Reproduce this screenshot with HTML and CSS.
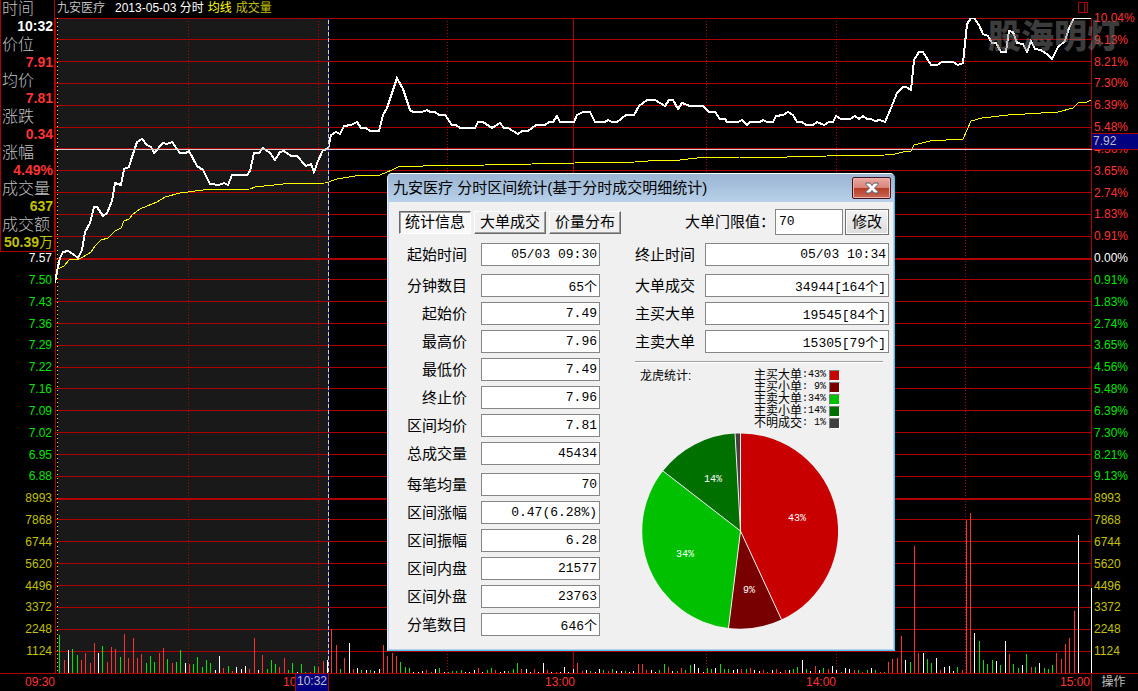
FILE: index.html
```html
<!DOCTYPE html>
<html lang="zh-CN">
<head>
<meta charset="utf-8">
<meta name="viewport" content="width=device-width, initial-scale=1">
<title>九安医疗 分时</title>
<link rel="stylesheet" href="styles.css">
</head>
<body>
<main class="terminal">
  <header class="chart-head">
    <h1 class="stock-name">九安医疗</h1>
    <span class="date">2013-05-03 分时</span>
    <span class="avg">均线</span>
    <span class="vol">成交量</span>
    <svg class="pane-icon" width="11" height="12" viewBox="0 0 11 12" aria-hidden="true"><path d="M0.5 0.5h9v10h-9zM6.5 0.5v10"/></svg>
  </header>

  <ol class="scale scale-left">
    <li class="flat">7.57</li>
    <li class="down">7.50</li>
    <li class="down">7.43</li>
    <li class="down">7.36</li>
    <li class="down">7.29</li>
    <li class="down">7.22</li>
    <li class="down">7.16</li>
    <li class="down">7.09</li>
    <li class="down">7.02</li>
    <li class="down">6.95</li>
    <li class="down">6.88</li>
    <li class="volume">8993</li>
    <li class="volume">7868</li>
    <li class="volume">6744</li>
    <li class="volume">5620</li>
    <li class="volume">4496</li>
    <li class="volume">3372</li>
    <li class="volume">2248</li>
    <li class="volume">1124</li>
  </ol>

  <svg class="plot" viewBox="55 18 1037 656" preserveAspectRatio="none" role="img" aria-label="分时走势图">
    <rect class="range" x="58" y="19" width="270" height="654"/>
    <path class="grid" d="M55 18.5H1092M55 39.5H1092M55 61.5H1092M55 83.5H1092M55 105.5H1092M55 127.5H1092M55 148.5H1092M55 170.5H1092M55 192.5H1092M55 214.5H1092M55 236.5H1092M55 279.5H1092M55 301.5H1092M55 323.5H1092M55 345.5H1092M55 367.5H1092M55 388.5H1092M55 410.5H1092M55 432.5H1092M55 454.5H1092M55 476.5H1092M55 519.5H1092M55 541.5H1092M55 563.5H1092M55 585.5H1092M55 607.5H1092M55 629.5H1092M55 651.5H1092M55 673.5H1092M55.5 18V674M573.5 18V674M1091.5 18V674"/>
    <path class="grid heavy" d="M55 259H1092M55 499H1092"/>
    <path class="grid dotted" d="M188.5 21V673M318.5 21V673M447.5 21V673M706.5 21V673M836.5 21V673M965.5 21V673"/>
    <path class="range-start" d="M57.5 18V673"/>
    <path class="bar up" d="M64.5 673V660M81.5 673V660M85.5 673V653M90.5 673V663M94.5 673V643M107.5 673V662M111.5 673V647M115.5 673V649M124.5 673V634M128.5 673V658M133.5 673V638M137.5 673V658M141.5 673V654M159.5 673V653M163.5 673V648M172.5 673V663M189.5 673V664M223.5 673V668M232.5 673V671M249.5 673V669M254.5 673V638M262.5 673V655M279.5 673V667M284.5 673V658M310.5 673V672M318.5 673V667M323.5 673V661M331.5 673V629M336.5 673V645M344.5 673V658M353.5 673V669M383.5 673V645M387.5 673V656M392.5 673V653M396.5 673V656M426.5 673V670M478.5 673V668M495.5 673V670M521.5 673V669M534.5 673V669M547.5 673V670M556.5 673V672M577.5 673V663M582.5 673V671M608.5 673V671M638.5 673V664M642.5 673V664M646.5 673V670M668.5 673V667M681.5 673V668M741.5 673V669M750.5 673V668M763.5 673V670M776.5 673V669M785.5 673V670M815.5 673V666M828.5 673V669M854.5 673V670M862.5 673V672M880.5 673V672M888.5 673V662M892.5 673V659M897.5 673V658M901.5 673V636M914.5 673V546M918.5 673V653M940.5 673V670M962.5 673V670M966.5 673V520M970.5 673V513M1009.5 673V654M1031.5 673V667M1056.5 673V653M1061.5 673V659M1065.5 673V644M1069.5 673V638M1074.5 673V611"/>
    <path class="bar down" d="M59.5 673V635M72.5 673V649M77.5 673V655M102.5 673V646M120.5 673V657M146.5 673V663M150.5 673V656M154.5 673V662M167.5 673V659M176.5 673V662M180.5 673V650M193.5 673V664M197.5 673V657M202.5 673V667M206.5 673V660M210.5 673V663M228.5 673V666M267.5 673V669M271.5 673V660M275.5 673V664M288.5 673V670M292.5 673V663M301.5 673V664M305.5 673V672M314.5 673V666M340.5 673V669M361.5 673V670M370.5 673V670M400.5 673V662M405.5 673V667M409.5 673V668M431.5 673V672M439.5 673V668M448.5 673V672M452.5 673V671M456.5 673V671M461.5 673V670M487.5 673V670M491.5 673V668M508.5 673V671M513.5 673V669M517.5 673V663M590.5 673V671M603.5 673V670M612.5 673V669M625.5 673V671M659.5 673V670M664.5 673V664M677.5 673V671M685.5 673V670M690.5 673V665M707.5 673V668M711.5 673V669M720.5 673V664M724.5 673V669M728.5 673V669M746.5 673V669M767.5 673V672M793.5 673V669M797.5 673V667M806.5 673V669M823.5 673V668M841.5 673V672M858.5 673V670M867.5 673V670M875.5 673V670M884.5 673V672M910.5 673V662M927.5 673V659M931.5 673V663M957.5 673V667M979.5 673V641M983.5 673V660M987.5 673V664M992.5 673V660M1000.5 673V665M1013.5 673V664M1018.5 673V668M1026.5 673V654M1035.5 673V667M1044.5 673V668M1048.5 673V669M1052.5 673V665"/>
    <path class="bar even" d="M68.5 673V650M98.5 673V653M185.5 673V663M215.5 673V670M219.5 673V656M236.5 673V667M241.5 673V669M245.5 673V666M258.5 673V670M297.5 673V672M327.5 673V660M349.5 673V643M357.5 673V668M366.5 673V670M374.5 673V671M379.5 673V669M413.5 673V672M418.5 673V672M422.5 673V671M435.5 673V669M444.5 673V672M465.5 673V672M469.5 673V672M474.5 673V670M482.5 673V672M500.5 673V672M504.5 673V671M526.5 673V669M530.5 673V672M538.5 673V672M543.5 673V663M551.5 673V672M560.5 673V672M564.5 673V667M568.5 673V672M573.5 673V669M586.5 673V670M595.5 673V672M599.5 673V669M616.5 673V671M621.5 673V671M629.5 673V672M633.5 673V671M651.5 673V670M655.5 673V672M672.5 673V671M694.5 673V664M698.5 673V668M703.5 673V672M715.5 673V668M733.5 673V670M737.5 673V669M754.5 673V670M759.5 673V671M772.5 673V670M780.5 673V672M789.5 673V670M802.5 673V660M810.5 673V671M819.5 673V670M832.5 673V666M836.5 673V670M845.5 673V668M849.5 673V669M871.5 673V668M905.5 673V660M923.5 673V653M936.5 673V658M944.5 673V667M949.5 673V666M953.5 673V671M974.5 673V633M996.5 673V661M1005.5 673V641M1022.5 673V665M1039.5 673V663M1078.5 673V535M1091.5 673V588"/>
    <polyline class="average" points="57,269 60,268 64,266 69,260 79,259 83,257 91,252 95,246 101,240 108,238 115,231 121,228 124,221 129,219 133,214 140,209 147,206 157,202 165,197 180,193 203,190 250,189 255,187 283,184 325,183 337,179 355,176 380,175 392,170 398,167 423,166 485,165 532,164 575,163 635,162 648,161 680,160 697,158 740,157 787,157 827,156 885,155 895,154 903,152 911,151 914,145 930,141 963,139 971,121 982,118 1008,115 1058,112 1073,108 1078,103 1087,102 1091,100"/>
    <polyline class="price" points="55,283 57,271 60,258 63,252 68,251 73,254 78,258 82,250 85,232 90,223 94,207 97,207 103,216 107,213 112,201 115,183 121,185 124,169 129,167 132,157 137,142 142,139 147,145 151,147 154,153 163,143 167,144 172,142 180,153 186,153 189,151 197,166 203,170 210,184 219,185 224,183 228,185 232,175 247,175 250,171 254,153 259,153 263,148 270,153 275,160 280,152 284,151 291,156 297,156 306,166 311,164 314,172 318,161 323,150 328,149 331,135 336,132 340,134 344,126 351,125 357,122 361,128 366,128 370,131 379,131 383,115 387,108 397,78 403,89 410,110 413,112 422,112 427,110 430,112 435,112 439,115 445,115 452,125 456,125 460,128 475,128 478,122 483,122 492,128 500,123 504,128 508,128 518,134 522,131 528,131 536,125 545,125 549,122 553,122 557,116 560,122 574,122 577,115 583,112 590,112 595,122 605,122 608,120 612,122 617,122 626,115 634,115 639,106 647,100 655,100 665,106 669,100 673,100 678,109 682,103 690,106 703,106 709,112 715,112 720,119 725,119 727,122 738,122 742,120 747,125 750,122 760,122 763,120 767,122 773,122 776,116 783,115 788,112 793,115 797,122 802,122 806,125 813,125 817,122 824,125 829,122 833,122 836,116 841,119 850,119 855,116 859,119 863,116 867,119 871,119 875,121 880,120 885,122 891,108 897,93 903,87 906,87 911,90 914,60 919,52 923,52 931,65 937,65 942,62 953,62 958,65 963,63 967,24 971,18 974,18 979,25 983,34 988,36 992,43 996,43 1001,52 1006,52 1009,31 1013,32 1017,43 1023,44 1027,52 1031,41 1035,49 1041,50 1048,55 1052,59 1058,47 1065,41 1069,28 1074,18 1091,18"/>
    <path class="cross" d="M55 149.5H1092M328.5 18V673"/>
    <path class="cross-dash" d="M328.5 18V673"/>
  </svg>

  <ol class="scale scale-right">
    <li class="up">10.04%</li>
    <li class="up">9.13%</li>
    <li class="up">8.21%</li>
    <li class="up">7.30%</li>
    <li class="up">6.39%</li>
    <li class="up">5.48%</li>
    <li class="up">4.56%</li>
    <li class="up">3.65%</li>
    <li class="up">2.74%</li>
    <li class="up">1.83%</li>
    <li class="up">0.91%</li>
    <li class="flat">0.00%</li>
    <li class="down">0.91%</li>
    <li class="down">1.83%</li>
    <li class="down">2.74%</li>
    <li class="down">3.65%</li>
    <li class="down">4.56%</li>
    <li class="down">5.48%</li>
    <li class="down">6.39%</li>
    <li class="down">7.30%</li>
    <li class="down">8.21%</li>
    <li class="down">9.13%</li>
    <li class="volume">8993</li>
    <li class="volume">7868</li>
    <li class="volume">6744</li>
    <li class="volume">5620</li>
    <li class="volume">4496</li>
    <li class="volume">3372</li>
    <li class="volume">2248</li>
    <li class="volume">1124</li>
  </ol>
  <span class="price-tag">7.92</span>
  <span class="watermark">股海明灯</span>

  <footer class="times">
    <span>09:30</span>
    <span class="covered">10:30</span>
    <span>13:00</span>
    <span>14:00</span>
    <span class="last">15:00</span>
    <button class="operate" type="button">操作</button>
    <span class="time-tag">10:32</span>
  </footer>

  <dl class="quote">
    <dt>时间</dt><dd class="flat">10:32</dd>
    <dt>价位</dt><dd class="up">7.91</dd>
    <dt>均价</dt><dd class="up">7.81</dd>
    <dt>涨跌</dt><dd class="up">0.34</dd>
    <dt>涨幅</dt><dd class="up">4.49%</dd>
    <dt>成交量</dt><dd class="volume">637</dd>
    <dt>成交额</dt><dd class="volume">50.39<span class="unit">万</span></dd>
  </dl>

  <section class="dialog" role="dialog" aria-labelledby="dialog-title">
    <div class="title-bar">
      <h2 id="dialog-title">九安医疗 分时区间统计(基于分时成交明细统计)</h2>
      <button class="close" type="button" aria-label="关闭">
        <svg width="14" height="12" viewBox="0 0 14 12" aria-hidden="true"><path d="M1 1h4l2 2.500l2-2.500h4v1.500l-3.500 3.500l3.500 3.500v1.500h-4l-2-2.500l-2 2.500h-4v-1.500l3.500-3.500l-3.500-3.500z"/></svg>
      </button>
    </div>
    <div class="dialog-body">
      <div class="toolbar">
        <div class="tabs">
          <button class="tab active" type="button">统计信息</button>
          <button class="tab" type="button">大单成交</button>
          <button class="tab" type="button">价量分布</button>
        </div>
        <div class="limit">
          <label for="limit">大单门限值：</label>
          <input id="limit" type="text" value="70">
          <button class="modify" type="button">修改</button>
        </div>
      </div>
      <div class="columns">
        <div class="fields fields-left">
          <div class="group">
            <div class="field"><label for="a1">起始时间</label><input id="a1" readonly value="05/03 09:30"></div>
          </div>
          <div class="group">
            <div class="field"><label for="a2">分钟数目</label><input id="a2" readonly value="65个"></div>
            <div class="field"><label for="a3">起始价</label><input id="a3" readonly value="7.49"></div>
            <div class="field"><label for="a4">最高价</label><input id="a4" readonly value="7.96"></div>
            <div class="field"><label for="a5">最低价</label><input id="a5" readonly value="7.49"></div>
            <div class="field"><label for="a6">终止价</label><input id="a6" readonly value="7.96"></div>
            <div class="field"><label for="a7">区间均价</label><input id="a7" readonly value="7.81"></div>
            <div class="field"><label for="a8">总成交量</label><input id="a8" readonly value="45434"></div>
          </div>
          <div class="group">
            <div class="field"><label for="a9">每笔均量</label><input id="a9" readonly value="70"></div>
            <div class="field"><label for="a10">区间涨幅</label><input id="a10" readonly value="0.47(6.28%)"></div>
            <div class="field"><label for="a11">区间振幅</label><input id="a11" readonly value="6.28"></div>
            <div class="field"><label for="a12">区间内盘</label><input id="a12" readonly value="21577"></div>
            <div class="field"><label for="a13">区间外盘</label><input id="a13" readonly value="23763"></div>
            <div class="field"><label for="a14">分笔数目</label><input id="a14" readonly value="646个"></div>
          </div>
        </div>
        <div class="side">
          <div class="fields fields-right">
            <div class="group">
              <div class="field"><label for="b1">终止时间</label><input id="b1" readonly value="05/03 10:34"></div>
            </div>
            <div class="group">
              <div class="field"><label for="b2">大单成交</label><input id="b2" readonly value="34944[164个]"></div>
              <div class="field"><label for="b3">主买大单</label><input id="b3" readonly value="19545[84个]"></div>
              <div class="field"><label for="b4">主卖大单</label><input id="b4" readonly value="15305[79个]"></div>
            </div>
          </div>
          <hr class="rule">
          <div class="share">
            <h3>龙虎统计:</h3>
            <ul class="legend">
              <li>主买大单<span class="num">:43%</span><i class="swatch big-buy"></i></li>
              <li>主买小单<span class="num">: 9%</span><i class="swatch small-buy"></i></li>
              <li>主卖大单<span class="num">:34%</span><i class="swatch big-sell"></i></li>
              <li>主卖小单<span class="num">:14%</span><i class="swatch small-sell"></i></li>
              <li>不明成交<span class="num">: 1%</span><i class="swatch unknown"></i></li>
            </ul>
          </div>
          <svg class="pie" width="196" height="196" viewBox="0 0 196 196" role="img" aria-label="龙虎统计饼图">
            <path class="big-buy" d="M98.500 98V0.500A97.500 97.500 0 0 1 139.500 186.500Z"/>
            <path class="small-buy" d="M98.500 98L139.500 186.500A97.500 97.500 0 0 1 86.500 195Z"/>
            <path class="big-sell" d="M98.500 98L86.500 195A97.500 97.500 0 0 1 21 38Z"/>
            <path class="small-sell" d="M98.500 98L21 38A97.500 97.500 0 0 1 93 0.500Z"/>
            <path class="unknown" d="M98.500 98L93 0.500H98.500Z"/>
            <path class="cuts" d="M98.500 0V98L139.500 186.500M98.500 98L86.500 195M98.500 98L21 38M98.500 98L93 0"/>
            <text x="155" y="88">43%</text>
            <text x="107" y="160">9%</text>
            <text x="43" y="124">34%</text>
            <text x="71" y="49">14%</text>
          </svg>
        </div>
      </div>
    </div>
  </section>
</main>
</body>
</html>
```

FILE: styles.css
```css
* {
  box-sizing: border-box;
}

body {
  margin: 0;
  background: #000;
  color: #c0c0c0;
  font: 12px/18px "Liberation Sans", "Noto Sans CJK SC", sans-serif;
}

h1, h2, h3, ol, ul, dl, dd {
  margin: 0;
  padding: 0;
  font-size: inherit;
  font-weight: normal;
  list-style: none;
}

button, input {
  margin: 0;
  padding: 0;
  font: inherit;
  color: inherit;
}

.up { color: #ff3232; }
.down { color: #00e600; }
.flat { color: #fff; }
.volume { color: #c0c000; }

.terminal {
  position: relative;
  display: grid;
  grid-template-columns: 55px minmax(0, 1fr) 46px;
  grid-template-rows: 18px minmax(0, 1fr) 17px;
  height: 100vh;
  min-height: 680px;
  overflow: hidden;
}

/* Header */
.chart-head {
  grid-column: 2;
  display: flex;
  gap: 4px;
  padding: 0 3px 0 2px;
  line-height: 17px;
  white-space: nowrap;
}
.stock-name { margin-right: 6px; }
.date { color: #fff; }
.avg { color: #ff0; }
.chart-head .vol { color: #c0c000; }
.pane-icon {
  margin: 2px 0 0 auto;
  fill: none;
  stroke: #b00000;
}

/* Value scales */
.scale {
  grid-row: 2;
  display: grid;
  grid-template-rows: repeat(30, minmax(0, 1fr));
  align-items: center;
  margin: -11px 0 12px;
}
.scale-left {
  grid-column: 1;
  grid-template-rows: 11fr repeat(19, minmax(0, 1fr));
  padding-right: 3px;
  text-align: right;
}
.scale-left::before { content: ""; }
.scale-right {
  grid-column: 3;
  padding-left: 2px;
}

/* Plot */
.plot {
  grid-area: 2 / 2;
  display: block;
  width: 100%;
  height: 100%;
  fill: none;
  shape-rendering: crispEdges;
}
.plot path, .plot polyline { vector-effect: non-scaling-stroke; }
.range { fill: #191919; }
.grid { stroke: #b00000; }
.heavy { stroke-width: 2; }
.dotted { stroke-dasharray: 1 2; }
.range-start { stroke: #ff0; stroke-dasharray: 1 3; }
.bar.up { stroke: #ff3232; }
.bar.down { stroke: #00e600; }
.bar.even { stroke: #fff; }
.average { stroke: #ff0; }
.price { stroke: #fff; stroke-width: 2; }
.cross { stroke: #d0d0d0; }
.cross-dash { stroke: #2020c0; stroke-dasharray: 2 4; }

.price-tag {
  position: absolute;
  top: 133px;
  right: 0;
  width: 46px;
  height: 17px;
  padding-left: 1px;
  border-top: 1px solid #b00000;
  border-bottom: 1px solid #b00000;
  background: #000080;
  line-height: 15px;
}
.watermark {
  position: absolute;
  top: 11px;
  right: 18px;
  color: rgba(120, 120, 120, 0.5);
  font: 900 33px/46px "Noto Sans CJK SC", sans-serif;
}

/* Time axis */
.times {
  position: relative;
  grid-column: 1 / -1;
  display: grid;
  grid-template-columns: 55px 263fr 257fr 261fr 256fr 46px;
  color: #ff3232;
  line-height: 17px;
  text-align: right;
  box-shadow: 0 -1px #b00000;
}
.covered { padding-right: 5px; }
.last {
  padding-right: 1px;
  border-right: 1px solid #b00000;
}
.operate {
  border: 0;
  padding-right: 3px;
  background: none;
  color: #c0c0c0;
}
.time-tag {
  position: absolute;
  top: 0;
  left: 295px;
  width: 34px;
  height: 17px;
  border: solid #b00000;
  border-width: 0 1px;
  background: #000080;
  color: #c0c0c0;
  line-height: 14px;
  text-align: center;
}

/* Quote panel */
.quote {
  position: absolute;
  top: 0;
  left: 0;
  width: 55px;
  height: 252px;
  padding: 0 1px;
  border: solid #b00000;
  border-width: 0 1px 1px;
  background: #000;
  font-size: 14px;
  line-height: 17px;
}
.quote dt { height: 18px; font-size: 16px; font-weight: 300; line-height: 17px; }
.quote dd { height: 18px; font-weight: bold; text-align: right; white-space: nowrap; }
.quote .unit { font-weight: normal; }

/* Statistics window */
.dialog {
  position: absolute;
  top: 173px;
  left: 387px;
  width: 508px;
  border: 1px solid;
  border-color: #fff #40c8f0 #40c8f0 #e8f0f8;
  border-radius: 5px 5px 0 0;
  background: #b9d1ea;
  color: #000;
  font: 15px/20px "Liberation Sans", "Noto Sans CJK SC", sans-serif;
}
.title-bar {
  display: flex;
  align-items: center;
  justify-content: space-between;
  height: 28px;
  padding: 0 3px 0 5px;
  border-radius: 4px 4px 0 0;
  background: linear-gradient(#99b4d1, #b9d1ea);
}
.close {
  display: grid;
  place-items: center;
  width: 39px;
  height: 22px;
  border: 1px solid #4a1020;
  border-radius: 2px;
  background: linear-gradient(#eaa9a0 0, #d98478 48%, #b83a25 50%, #c96a58 100%);
  box-shadow: inset 0 0 0 1px #eab4ac;
}
.close path { fill: #fff; stroke: #555a66; }

.dialog-body {
  margin: 0 1px 1px;
  padding: 6px 4px 13px 10px;
  background: #f0f0f0;
}
.toolbar {
  display: flex;
  align-items: center;
  justify-content: space-between;
  height: 28px;
  margin-bottom: 7px;
}
.tabs { display: flex; gap: 3px; }
.tab {
  width: 72px;
  height: 23px;
  border: 1px solid;
  border-color: #fff #696969 #696969 #fff;
  background: #f0f0f0;
  box-shadow: inset -1px -1px #a0a0a0;
  line-height: 20px;
}
.tab.active {
  border-color: #696969 #fff #fff #696969;
  background: #f8f8f8;
  box-shadow: inset 1px 1px #a0a0a0;
}
.limit { display: flex; align-items: center; }
.limit input {
  width: 68px;
  height: 26px;
  margin-right: 2px;
  padding: 0 3px 2px;
  border: 1px solid #868686;
  background: #fff;
  font: 13px/20px "Liberation Mono", "Noto Sans CJK SC", monospace;
}
.modify {
  width: 44px;
  height: 26px;
  border: 1px solid #707070;
  background: linear-gradient(#f3f3f3, #dcdcdc);
  box-shadow: inset 0 0 0 1px #fff;
}

.columns {
  display: grid;
  grid-template-columns: 201px minmax(0, 1fr);
  gap: 35px;
}
.fields { display: grid; gap: 8px; }
.group { display: grid; gap: 5px; }
.field { display: grid; align-items: center; height: 23px; }
.fields-left .field { grid-template-columns: 68px 119px; gap: 14px; }
.fields-right .field { grid-template-columns: 60px minmax(0, 1fr); gap: 10px; }
.field label { text-align: right; }
.field input {
  width: 100%;
  height: 23px;
  padding: 0 2px;
  border: 1px solid #868686;
  background: #fff;
  font: 13px/20px "Liberation Mono", "Noto Sans CJK SC", monospace;
  text-align: right;
}

.rule {
  height: 2px;
  margin: 8px 6px 6px 0;
  border: solid;
  border-width: 1px 0;
  border-color: #a0a0a0 transparent #fff;
}
.share {
  display: flex;
  justify-content: space-between;
  padding: 0 49px 0 5px;
  font-size: 12px;
  line-height: 15px;
}
.legend li {
  display: flex;
  align-items: center;
  height: 12px;
  line-height: 12px;
}
.num {
  margin-right: 3px;
  font-family: "Liberation Mono", monospace;
  font-size: 10px;
  white-space: pre;
}
.swatch {
  width: 11px;
  height: 11px;
  border: 1px solid;
  border-color: #808080 #fff #fff #808080;
}

.big-buy { background: #c80000; fill: #c80000; }
.small-buy { background: #780000; fill: #780000; }
.big-sell { background: #00c000; fill: #00c000; }
.small-sell { background: #007000; fill: #007000; }
.unknown { background: #404040; fill: #404040; }

.pie {
  display: block;
  margin: 4px 0 0 7px;
}
.cuts { fill: none; stroke: #f0f0f0; }
.pie text {
  fill: #fff;
  font: 10px "Liberation Mono", monospace;
  text-anchor: middle;
}
```
